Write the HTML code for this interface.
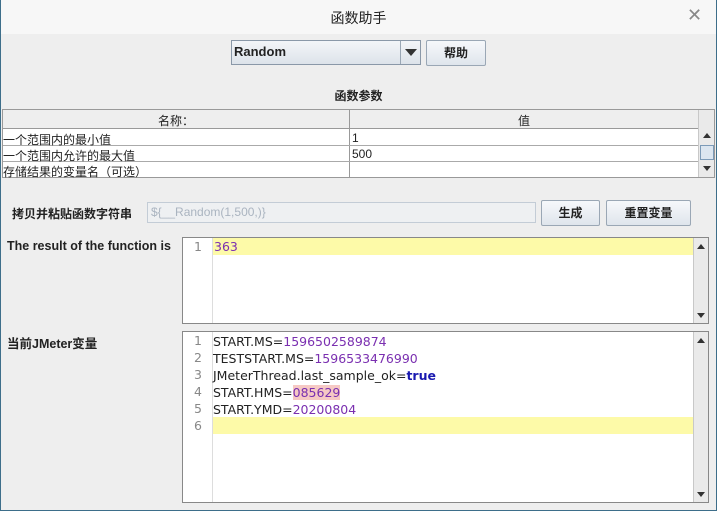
<!DOCTYPE html>
<html><head><meta charset="utf-8"><style>
*{box-sizing:border-box;margin:0;padding:0}
body{width:717px;height:511px;overflow:hidden;background:#eeeeee;font-family:"Liberation Sans","Noto Sans CJK SC",sans-serif;font-size:12px;color:#222;position:relative}
.win{position:absolute;left:0;top:0;width:717px;height:511px;border:1px solid #3d6e8a;border-top:none}
.abs{position:absolute}
.title{left:1px;top:0;width:715px;height:34px;background:#f7f7f7}
.btn{background:linear-gradient(#f6f8fb,#dfe5ec);border:1px solid #9aa7b5;border-radius:2px;font-weight:bold;text-align:center;font-size:12px}
.b{font-weight:bold}
.sb{background:#eaeaea;border-left:1px solid #c8c8c8}
.arrow{position:absolute;left:4px;width:0;height:0;border-left:4px solid transparent;border-right:4px solid transparent}
.code{font-family:"DejaVu Sans","Noto Sans CJK SC",sans-serif;font-size:12.5px}
.ln{position:absolute;left:0;width:24px;text-align:right;color:#888;font-family:"DejaVu Sans",sans-serif;font-size:12.5px}
.p{color:#7a2fb0}
</style></head><body>
<div class="win"></div>
<div class="abs title"></div>
<div class="abs" style="left:0;top:8px;width:717px;text-align:center;font-size:14px">函数助手</div>
<div class="abs" style="left:687px;top:5px;font-size:18px;color:#888">✕</div>

<div class="abs" style="left:231px;top:40px;width:190px;height:25px;border:1px solid #8a98a8;background:linear-gradient(#f3f5f8,#dde3ea)"></div>
<div class="abs b" style="left:234px;top:44px;font-size:13px">Random</div>
<div class="abs" style="left:400px;top:41px;width:1px;height:23px;background:#9aa7b5"></div>
<div class="abs" style="left:405px;top:49px;border-left:6px solid transparent;border-right:6px solid transparent;border-top:7px solid #333"></div>
<div class="abs btn" style="left:426px;top:40px;width:60px;height:26px;line-height:24px">帮助</div>

<div class="abs b" style="left:0;top:87px;width:717px;text-align:center">函数参数</div>

<div class="abs" style="left:2px;top:109px;width:713px;height:69px;border:1px solid #999;background:#fff"></div>
<div class="abs" style="left:3px;top:110px;width:695px;height:19px;background:#eeeeee;border-bottom:1px solid #999"></div>
<div class="abs" style="left:349px;top:110px;width:1px;height:67px;background:#999"></div>
<div class="abs" style="left:3px;top:112px;width:346px;text-align:center">名称：</div>
<div class="abs" style="left:350px;top:112px;width:348px;text-align:center">值</div>
<div class="abs" style="left:3px;top:145px;width:695px;height:1px;background:#aaa"></div>
<div class="abs" style="left:3px;top:161px;width:695px;height:1px;background:#aaa"></div>
<div class="abs" style="left:3px;top:131px">一个范围内的最小值</div>
<div class="abs" style="left:352px;top:131px">1</div>
<div class="abs" style="left:3px;top:147px">一个范围内允许的最大值</div>
<div class="abs" style="left:352px;top:147px">500</div>
<div class="abs" style="left:3px;top:163px">存储结果的变量名（可选）</div>
<div class="abs sb" style="left:698px;top:110px;width:16px;height:67px">
 <div class="arrow" style="top:23px;border-bottom:5px solid #333"></div>
 <div class="abs" style="left:1px;top:35px;width:14px;height:15px;border:1px solid #7d9bb8;background:#dce6f0"></div>
 <div class="arrow" style="top:56px;border-top:5px solid #333"></div>
</div>

<div class="abs b" style="left:12px;top:205px">拷贝并粘贴函数字符串</div>
<div class="abs" style="left:147px;top:202px;width:389px;height:21px;border:1px solid #c3ccd6;background:#eef0f2;color:#aab4c0;padding:2px 3px;font-size:12px">${__Random(1,500,)}</div>
<div class="abs btn" style="left:541px;top:200px;width:59px;height:26px;line-height:24px">生成</div>
<div class="abs btn" style="left:606px;top:200px;width:85px;height:26px;line-height:24px">重置变量</div>

<div class="abs b" style="left:7px;top:239px;font-size:12.5px">The result of the function is</div>
<div class="abs" style="left:182px;top:237px;width:527px;height:87px;border:1px solid #888;background:#fff"></div>
<div class="abs" style="left:212px;top:238px;width:1px;height:85px;background:#ddd"></div>
<div class="abs" style="left:213px;top:238px;width:480px;height:17px;background:#fdfaa8"></div>
<div class="ln" style="left:178px;top:239px">1</div>
<div class="abs code p" style="left:214px;top:239px">363</div>
<div class="abs sb" style="left:693px;top:238px;width:15px;height:85px">
 <div class="arrow" style="top:6px;border-bottom:5px solid #333;left:3px"></div>
 <div class="arrow" style="top:75px;border-top:5px solid #333;left:3px"></div>
</div>

<div class="abs b" style="left:7px;top:333px;font-size:12.5px">当前JMeter变量</div>
<div class="abs" style="left:182px;top:331px;width:527px;height:172px;border:1px solid #888;background:#fff"></div>
<div class="abs" style="left:212px;top:332px;width:1px;height:170px;background:#ddd"></div>
<div class="abs" style="left:213px;top:417px;width:480px;height:17px;background:#fdfaa8"></div>
<div class="ln" style="left:178px;top:333px">1</div>
<div class="ln" style="left:178px;top:350px">2</div>
<div class="ln" style="left:178px;top:367px">3</div>
<div class="ln" style="left:178px;top:384px">4</div>
<div class="ln" style="left:178px;top:401px">5</div>
<div class="ln" style="left:178px;top:418px">6</div>
<div class="abs code" style="left:213px;top:333px;line-height:17px">
START.MS=<span class="p">1596502589874</span><br>
TESTSTART.MS=<span class="p">1596533476990</span><br>
JMeterThread.last_sample_ok=<b style="color:#1a1ab0">true</b><br>
START.HMS=<span class="p" style="background:#f6c9c4">085629</span><br>
START.YMD=<span class="p">20200804</span>
</div>
<div class="abs sb" style="left:693px;top:332px;width:15px;height:170px">
 <div class="arrow" style="top:6px;border-bottom:5px solid #333;left:3px"></div>
 <div class="arrow" style="top:160px;border-top:5px solid #333;left:3px"></div>
</div>
</body></html>
